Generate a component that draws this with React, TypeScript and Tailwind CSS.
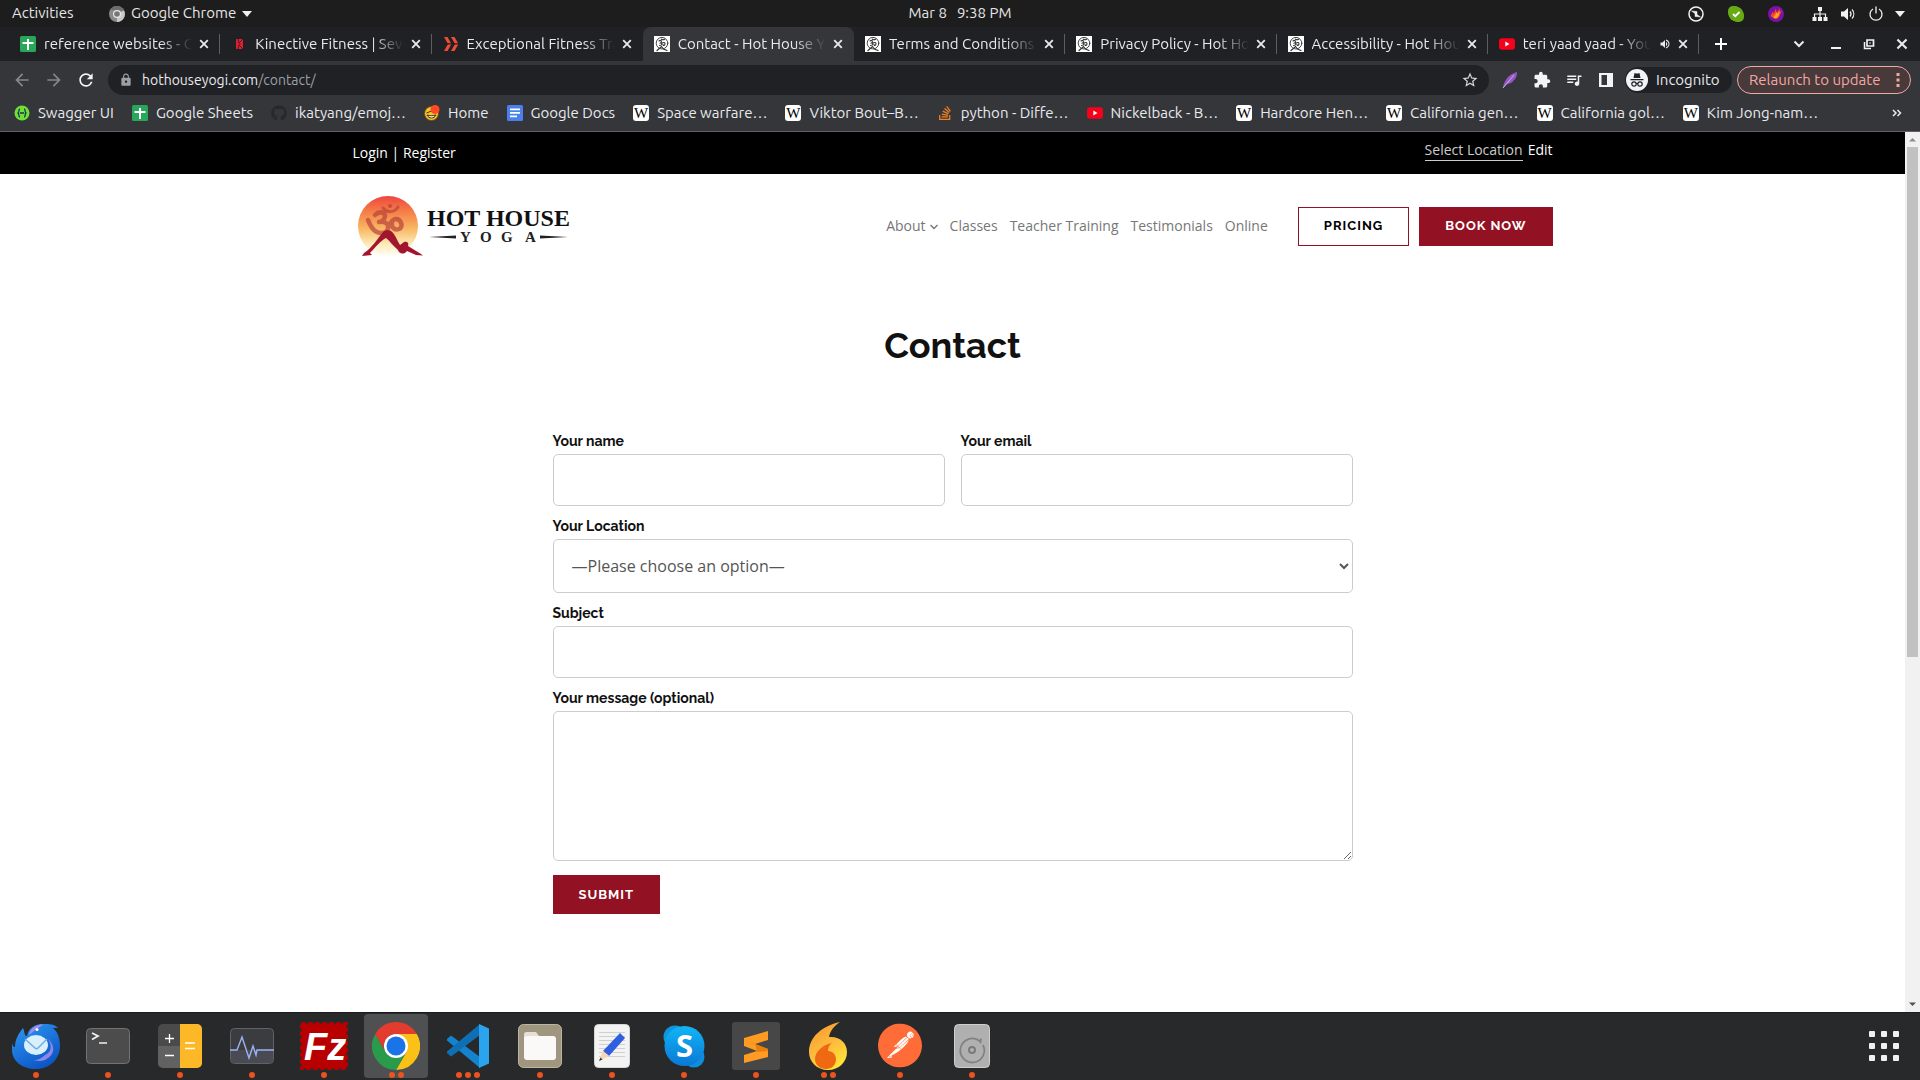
import React from "react";
import {
  MdArrowBack,
  MdArrowForward,
  MdRefresh,
  MdLock,
  MdStarBorder,
  MdExtension,
  MdQueueMusic,
  MdVolumeUp,
} from "react-icons/md";
import { FaGithub, FaStackOverflow } from "react-icons/fa";
import { SiPostman } from "react-icons/si";

type IconKind =
  | "sheets"
  | "kinective"
  | "exceptional"
  | "hothouse"
  | "youtube"
  | "swagger"
  | "github"
  | "home"
  | "docs"
  | "wiki"
  | "stack";

function SiteIcon({ kind }: { kind: IconKind }) {
  switch (kind) {
    case "sheets":
      return (
        <svg viewBox="0 0 16 16" className="size-4 shrink-0" aria-hidden="true">
          <rect width="16" height="16" rx="1.500" fill="#28a65a" />
          <path d="M7 3h2v11H7zM2.500 6h11v2h-11z" fill="#fff" />
        </svg>
      );
    case "kinective":
      return (
        <svg viewBox="0 0 16 16" className="size-4 shrink-0" aria-hidden="true">
          <path d="M5 3h7v10H5z" fill="#d62433" />
          <path d="M7 3l1 4 4-4M7 13l1-4 4 4M7.500 8h2" fill="none" stroke="#5d1018" strokeWidth=".9" />
        </svg>
      );
    case "exceptional":
      return (
        <svg viewBox="0 0 16 16" className="size-4 shrink-0" aria-hidden="true">
          <path d="M1 1h3.500l4 7-4 7H1l4-7zM8 1h3.500l4 7-4 7H8l4-7z" fill="#f04a38" />
          <path d="M0 7.200h16v1.300H0z" fill="#202124" />
        </svg>
      );
    case "hothouse":
      return (
        <svg viewBox="0 0 16 16" className="size-4 shrink-0" aria-hidden="true">
          <rect width="16" height="16" fill="#fff" />
          <g fill="none" stroke="#333" strokeLinecap="round">
            <circle cx="8" cy="7.200" r="5.800" strokeWidth=".9" />
            <path d="M5 5c2-1.500 3.500.5 1.500 2 2 0 2 2.500-1 2.500M8 7c2-1 3-.5 3 1s-2 2-2 .5M7.500 3.200c1 .8 2 .8 3 0" strokeWidth="1.100" />
            <path d="M3 14.500l4.500-4 2 2.500 3.500 1.500" strokeWidth="1.200" />
          </g>
        </svg>
      );
    case "youtube":
      return (
        <svg viewBox="0 0 16 16" className="size-4 shrink-0" aria-hidden="true">
          <rect y="2.200" width="16" height="11.600" rx="3" fill="#f6001c" />
          <path d="M6.300 5.500v5L10.500 8z" fill="#fff" />
        </svg>
      );
    case "swagger":
      return (
        <svg viewBox="0 0 16 16" className="size-4 shrink-0" aria-hidden="true">
          <circle cx="8" cy="8" r="7.500" fill="#6fe03a" />
          <path
            d="M6 4C4.500 4 5 6 4.700 7c-.2.600-.7 1-1.200 1 .5 0 1 .4 1.200 1 .3 1-.2 3 1.300 3M10 4c1.500 0 1 2 1.300 3 .2.600.7 1 1.200 1-.5 0-1 .4-1.200 1-.3 1 .2 3-1.300 3M6 8h4"
            fill="none"
            stroke="#173647"
            strokeWidth="1.300"
          />
        </svg>
      );
    case "github":
      return <FaGithub className="size-4 shrink-0 text-[#24292e]" aria-hidden="true" />;
    case "home":
      return (
        <svg viewBox="0 0 16 16" className="size-4 shrink-0" aria-hidden="true">
          <circle cx="7.500" cy="8.500" r="7" fill="#f5c52c" stroke="#6b4a12" />
          <path d="M2.500 8l5-2M3 10c2 4 7 4 9 0-3 1-6 1-9 0z" fill="#fff" stroke="#3a2a10" />
          <circle cx="11" cy="4.500" r="4.500" fill="#ff4b1f" />
        </svg>
      );
    case "docs":
      return (
        <svg viewBox="0 0 16 16" className="size-4 shrink-0" aria-hidden="true">
          <rect width="16" height="16" rx="1.500" fill="#4a80ee" />
          <path d="M3 3.500h10v1.800H3zM3 7h10v1.800H3zM3 10.500h7v1.800H3z" fill="#fff" />
        </svg>
      );
    case "wiki":
      return (
        <span
          aria-hidden="true"
          className="flex size-4 shrink-0 items-center justify-center rounded-[3px] bg-white font-['Liberation_Serif',serif] text-[15px] leading-4 text-black"
        >
          W
        </span>
      );
    case "stack":
      return <FaStackOverflow className="size-4 shrink-0 text-[#f48024]" aria-hidden="true" />;
  }
}

const tabs: { title: string; icon: IconKind; active?: boolean; audio?: boolean; line?: boolean }[] = [
  { title: "reference websites - Goo", icon: "sheets", line: true },
  { title: "Kinective Fitness | Seven", icon: "kinective", line: true },
  { title: "Exceptional Fitness Trai", icon: "exceptional" },
  { title: "Contact - Hot House Yog", icon: "hothouse", active: true },
  { title: "Terms and Conditions -", icon: "hothouse", line: true },
  { title: "Privacy Policy - Hot Hou", icon: "hothouse", line: true },
  { title: "Accessibility - Hot Hous", icon: "hothouse", line: true },
  { title: "teri yaad yaad - YouT", icon: "youtube", audio: true, line: true },
];

const bookmarks: { title: string; icon: IconKind }[] = [
  { title: "Swagger UI", icon: "swagger" },
  { title: "Google Sheets", icon: "sheets" },
  { title: "ikatyang/emoj…", icon: "github" },
  { title: "Home", icon: "home" },
  { title: "Google Docs", icon: "docs" },
  { title: "Space warfare…", icon: "wiki" },
  { title: "Viktor Bout–B…", icon: "wiki" },
  { title: "python - Diffe…", icon: "stack" },
  { title: "Nickelback - B…", icon: "youtube" },
  { title: "Hardcore Hen…", icon: "wiki" },
  { title: "California gen…", icon: "wiki" },
  { title: "California gol…", icon: "wiki" },
  { title: "Kim Jong-nam…", icon: "wiki" },
];

function Cross({ className }: { className: string }) {
  return (
    <svg viewBox="0 0 10 10" className={className} aria-hidden="true">
      <path d="M1.200 1.200l7.600 7.600M8.800 1.200L1.200 8.800" stroke="currentColor" strokeWidth="1.800" />
    </svg>
  );
}

function SystemBar() {
  return (
    <header className="grid h-[27px] shrink-0 grid-cols-[1fr_auto_1fr] items-center bg-[#1d1d1d] text-[15px] text-[#e6e6e6]">
      <div className="flex items-center pl-3">
        <button type="button" className="w-[97px] text-left">
          Activities
        </button>
        <button type="button" className="flex items-center gap-[6px]">
          <svg viewBox="0 0 16 16" className="size-4" aria-hidden="true">
            <circle cx="8" cy="8" r="8" fill="#8a8a8a" />
            <path d="M8 8L15 4.500A8 8 0 0 1 8 16z" fill="#c9c9c9" />
            <path d="M1 4a8 8 0 0 1 14 .5H8z" fill="#6e6e6e" />
            <circle cx="8" cy="8" r="4" fill="#e8e8e8" />
            <circle cx="8" cy="8" r="2.800" fill="#777" />
          </svg>
          <span>Google Chrome</span>
          <svg viewBox="0 0 10 6" className="h-[6px] w-[10px]" aria-hidden="true">
            <path d="M0 0h10L5 6z" fill="#f0f0f0" />
          </svg>
        </button>
      </div>
      <button type="button" className="flex gap-[10px]">
        <span>Mar 8</span>
        <span>9:38 PM</span>
      </button>
      <div className="flex items-center justify-end pr-[15px]">
        <svg viewBox="0 0 16 16" className="mr-6 size-4" aria-hidden="true">
          <circle cx="8" cy="8" r="7" fill="none" stroke="#f2f2f2" strokeWidth="1.500" />
          <path d="M3.500 5l5.500.5v3l3.500 2.500L7 10.500v-3z" fill="#f2f2f2" stroke="#f2f2f2" strokeWidth=".5" />
        </svg>
        <svg viewBox="0 0 16 16" className="mr-6 size-4" aria-hidden="true">
          <rect width="12" height="12" rx="5" fill="#66aa14" />
          <rect x="4" y="4" width="12" height="12" rx="5" fill="#66aa14" />
          <circle cx="8" cy="8" r="7.300" fill="#66aa14" />
          <path d="M5 8l2.300 2.200L11.500 6" fill="none" stroke="#fff" strokeWidth="1.800" />
        </svg>
        <svg viewBox="0 0 16 16" className="mr-7 size-4" aria-hidden="true">
          <circle cx="8" cy="8" r="8" fill="#7b12a8" />
          <path d="M2.500 10L5 5.500 5.500 8 8 2.500 8.500 7 12 2l-.5 4L14 4.500 11 11c-1 1.500-2.500 2-4 2z" fill="#ff4a26" />
          <path d="M5.500 12c0-2 2.500-3 3-6l1 2 2-3c0 3-1 5-3 7z" fill="#ffb11b" />
        </svg>
        <svg viewBox="0 0 16 16" className="mr-3 size-4" aria-hidden="true">
          <path d="M6 1h4v4H6zM0.500 11h4v4h-4zM6 11h4v4H6zM11.500 11h4v4h-4z" fill="#f2f2f2" />
          <path d="M8 5v6M2.500 11V8h11v3" fill="none" stroke="#f2f2f2" strokeWidth="1.200" />
        </svg>
        <svg viewBox="0 0 16 16" className="mr-3 size-4" aria-hidden="true">
          <path d="M1 5.500h3L8 2v12L4 10.500H1z" fill="#f2f2f2" />
          <path d="M10 5.500c1.300 1.500 1.300 3.500 0 5M12 3.500c2.400 2.600 2.400 6.400 0 9" fill="none" stroke="#f2f2f2" strokeWidth="1.200" />
        </svg>
        <svg viewBox="0 0 16 16" className="mr-[11px] size-4" aria-hidden="true">
          <path d="M5 3a6 6 0 1 0 6 0M8 0.500v7" fill="none" stroke="#f2f2f2" strokeWidth="1.300" />
        </svg>
        <svg viewBox="0 0 10 6" className="h-[6px] w-[10px]" aria-hidden="true">
          <path d="M0 0h10L5 6z" fill="#f0f0f0" />
        </svg>
      </div>
    </header>
  );
}

function TabStrip() {
  return (
    <div className="flex h-[34px] shrink-0 bg-[#202124] pl-[9px] text-[15px] text-[#e8eaed]">
      <div role="tablist" className="flex min-w-0 flex-1">
        {tabs.map((tab, i) => (
          <div
            key={i}
            role="tab"
            aria-selected={!!tab.active}
            className={
              tab.active
                ? "relative flex min-w-0 flex-1 items-center rounded-t-lg bg-[#35363a] pr-2 pl-[11px]"
                : "relative flex min-w-0 flex-1 items-center pr-2 pl-[11px]"
            }
          >
            <SiteIcon kind={tab.icon} />
            <span className="ml-2 min-w-0 flex-1 overflow-hidden [mask-image:linear-gradient(to_right,black_calc(100%-32px),transparent)] whitespace-nowrap">
              {tab.title}
            </span>
            {tab.audio && <MdVolumeUp className="ml-2 size-3 shrink-0" aria-hidden="true" />}
            <button type="button" aria-label="Close tab" className="ml-1 flex size-4 shrink-0 items-center justify-center">
              <Cross className="size-[10px]" />
            </button>
            {tab.line && <span className="absolute top-[7px] right-0 h-5 w-px bg-[#5b5d61]" />}
          </div>
        ))}
      </div>
      <div className="flex w-[221px] shrink-0 items-center justify-between pr-3 pl-4">
        <button type="button" aria-label="New tab">
          <svg viewBox="0 0 12 12" className="size-3" aria-hidden="true">
            <path d="M6 0v12M0 6h12" stroke="#fff" strokeWidth="2" />
          </svg>
        </button>
        <div className="flex items-center gap-[21px]">
          <button type="button" aria-label="Search tabs" className="mr-1">
            <svg viewBox="0 0 12 8" className="h-2 w-3" aria-hidden="true">
              <path d="M1.500 1.500L6 6l4.500-4.500" fill="none" stroke="#e8eaed" strokeWidth="2" />
            </svg>
          </button>
          <button type="button" aria-label="Minimize">
            <svg viewBox="0 0 12 12" className="size-3" aria-hidden="true">
              <path d="M1 9h10v2H1z" fill="#f2f2f2" />
            </svg>
          </button>
          <button type="button" aria-label="Restore">
            <svg viewBox="0 0 12 12" className="size-3" aria-hidden="true">
              <path d="M4 2h6.500v6H4zM7 4.500v1" fill="none" stroke="#f2f2f2" strokeWidth="1.700" />
              <path d="M1.500 4v6.500H8" fill="none" stroke="#f2f2f2" strokeWidth="1.500" />
            </svg>
          </button>
          <button type="button" aria-label="Close window">
            <Cross className="size-3" />
          </button>
        </div>
      </div>
    </div>
  );
}

function Toolbar() {
  return (
    <div className="flex h-[38px] shrink-0 items-center bg-[#35363a] pr-[9px] pl-3 text-[15px] text-[#e8eaed]">
      <div className="flex gap-3">
        <button type="button" aria-label="Back" className="text-[#85878a]">
          <MdArrowBack className="size-5" />
        </button>
        <button type="button" aria-label="Forward" className="text-[#85878a]">
          <MdArrowForward className="size-5" />
        </button>
        <button type="button" aria-label="Reload" className="text-[#f1f3f4]">
          <MdRefresh className="size-5" />
        </button>
      </div>
      <div className="ml-3 flex h-[30px] min-w-0 flex-1 items-center rounded-full bg-[#202124] pr-[10px] pl-[11px]">
        <MdLock className="size-[14px] shrink-0 text-[#9aa0a6]" aria-hidden="true" />
        <a href="#address" className="ml-[9px] flex-1 text-[14px] text-[#e8eaed]">
          hothouseyogi.com<span className="text-[#9aa0a6]">/contact/</span>
        </a>
        <button type="button" aria-label="Bookmark this page">
          <MdStarBorder className="size-[18px] text-[#d5d7da]" />
        </button>
      </div>
      <div className="ml-3 flex items-center gap-[14px]">
        <svg viewBox="0 0 18 18" className="size-[18px]" aria-hidden="true">
          <path d="M2 17C3 9 8 3 16 1c0 4-1 7-4 9 .5.500-3 3-6 3z" fill="#9457c4" />
          <path d="M2 17L13 4" stroke="#d3a9ef" strokeWidth="1" />
        </svg>
        <MdExtension className="size-[18px] text-[#f1f3f4]" aria-hidden="true" />
        <MdQueueMusic className="size-[18px] text-[#f1f3f4]" aria-hidden="true" />
        <svg viewBox="0 0 18 18" className="size-[18px]" aria-hidden="true">
          <path d="M2 2h14v14H2zM4.500 4v10H10V4z" fill="#f1f3f4" fillRule="evenodd" />
        </svg>
      </div>
      <button type="button" className="ml-[10px] flex h-[26px] w-[107px] items-center gap-2 rounded-full bg-[#202124] pl-px">
        <svg viewBox="0 0 22 22" className="size-[22px]" aria-hidden="true">
          <circle cx="11" cy="11" r="11" fill="#f1f3f4" />
          <path d="M7.500 9l1-5 1.500.5h2l1.500-.5 1 5zM4.500 10h13v1.300h-13z" fill="#202124" />
          <circle cx="8" cy="15" r="2.200" fill="none" stroke="#202124" strokeWidth="1.200" />
          <circle cx="14" cy="15" r="2.200" fill="none" stroke="#202124" strokeWidth="1.200" />
          <path d="M10 14.500h2" stroke="#202124" />
        </svg>
        Incognito
      </button>
      <button
        type="button"
        className="ml-[5px] flex h-7 w-[174px] items-center justify-between rounded-full border border-[#f2a9a4] bg-[#48393b] pr-[10px] pl-[11px] text-[#f2a9a4]"
      >
        Relaunch to update
        <svg viewBox="0 0 4 14" className="h-[14px] w-1" aria-hidden="true">
          <path d="M.5 0h3v3h-3zM.5 5.500h3v3h-3zM.5 11h3v3h-3z" fill="#f2a9a4" />
        </svg>
      </button>
    </div>
  );
}

function BookmarksBar() {
  return (
    <nav
      aria-label="Bookmarks"
      className="flex h-[33px] shrink-0 items-center border-b border-[#5f6164] bg-[#35363a] pr-[18px] pb-1 pl-[14px] text-[15px] text-[#e8eaed]"
    >
      <ul className="flex min-w-0 flex-1 gap-[18px]">
        {bookmarks.map((b, i) => (
          <li key={i}>
            <a href="#bookmark" className="flex items-center gap-2 whitespace-nowrap">
              <SiteIcon kind={b.icon} />
              {b.title}
            </a>
          </li>
        ))}
      </ul>
      <button type="button" aria-label="More bookmarks">
        <svg viewBox="0 0 10 8" className="h-2 w-[10px]" aria-hidden="true">
          <path d="M1 1l3 3-3 3M5.500 1l3 3-3 3" fill="none" stroke="#e8eaed" strokeWidth="1.500" />
        </svg>
      </button>
    </nav>
  );
}

function YogaLogo() {
  return (
    <a href="#home" aria-label="Hot House Yoga" className="block">
      <svg viewBox="0 0 220 64" className="h-16 w-[220px]">
        <defs>
          <linearGradient id="sun" x1="0" y1="0" x2="0" y2="1">
            <stop offset="0" stopColor="#ee4640" />
            <stop offset=".25" stopColor="#f47c45" />
            <stop offset=".55" stopColor="#f9b866" />
            <stop offset=".8" stopColor="#fdebb8" />
            <stop offset="1" stopColor="#fffdf6" />
          </linearGradient>
        </defs>
        <circle cx="35" cy="32" r="30" fill="url(#sun)" />
        <g fill="none" stroke="#b8433a" strokeOpacity=".7" strokeLinecap="round" strokeLinejoin="round">
          <path
            d="M22 21c5-5 13-2 9 4-1 2-4 3-5 3 6-1 10 2 9 6-1 5-4 5-7 5-6 0-10-5-13-13M34 30c4 2 4-5 9-5s8 8 3 10-8-3-7-6"
            strokeWidth="4.500"
          />
          <path d="M30 14c4 5 11 5 15-1" strokeWidth="3" />
        </g>
        <circle cx="37" cy="12" r="2" fill="#b8433a" fillOpacity=".75" />
        <path
          d="M9 62l2-3c9-6 13-14 19-21 2-2 5-3 8-1 4 3 6 9 9 14l4-3c4-1 5 2 4 4l13 8 2 1.500-7-.5-9-4c-3 4-8 3-9-1-5-4-8-9-12-12-6 3-11 10-16 15l2 2z"
          fill="#a3142f"
        />
        <text x="74" y="32" fontFamily="'Liberation Serif', serif" fontSize="24" fontWeight="700" fill="#111">
          HOT HOUSE
        </text>
        <g fontFamily="'Liberation Serif', serif" fontSize="15" fontWeight="700" fill="#222">
          <text x="107" y="48">Y</text>
          <text x="127" y="48">O</text>
          <text x="148" y="48">G</text>
          <text x="172" y="48">A</text>
        </g>
        <path d="M76 43l27-1.500v3zM215 43l-28-1.500v3z" fill="#222" />
      </svg>
    </a>
  );
}

function SiteHeader() {
  return (
    <>
      <div className="h-[42px] shrink-0 bg-black text-[14px] text-white">
        <div className="mx-auto flex max-w-[1200px] justify-between leading-5">
          <p className="pt-[11px]">
            <a href="#login">Login</a> | <a href="#register">Register</a>
          </p>
          <p className="flex items-start gap-[5px] pt-2">
            <a href="#location" className="border-b border-[#ccc] text-[#ccc]">
              Select Location
            </a>
            <a href="#edit">Edit</a>
          </p>
        </div>
      </div>
      <div className="mx-auto flex h-[104px] w-full max-w-[1200px] shrink-0 items-center justify-between">
        <YogaLogo />
        <div className="flex items-center text-[14px] text-[#777]">
          <nav aria-label="Main" className="mr-[30px] flex gap-3 pb-[2px]">
            <a href="#about" className="flex items-center gap-1">
              About
              <svg viewBox="0 0 8 6" className="mt-1 h-[6px] w-2" aria-hidden="true">
                <path d="M.5 1L4 4.500 7.500 1" fill="none" stroke="#777" strokeWidth="1.400" />
              </svg>
            </a>
            <a href="#classes">Classes</a>
            <a href="#teacher-training">Teacher Training</a>
            <a href="#testimonials">Testimonials</a>
            <a href="#online">Online</a>
          </nav>
          <a
            href="#pricing"
            className="flex h-[39px] items-center border border-[#921122] px-[25px] font-['Raleway','Lato',sans-serif] text-[13px] font-bold tracking-[1px] text-black"
          >
            PRICING
          </a>
          <a
            href="#book"
            className="ml-[10px] flex h-[39px] items-center border border-[#921122] bg-[#921122] px-[25px] font-['Raleway','Lato',sans-serif] text-[13px] font-bold tracking-[1px] text-white"
          >
            BOOK NOW
          </a>
        </div>
      </div>
    </>
  );
}

const labelClass = "block font-['Raleway','Lato',sans-serif] text-[14px] leading-[25px] font-bold text-[#111]";
const inputClass = "block h-[52px] w-full rounded-[5px] border border-[#ccc] bg-white px-4 text-[16px] text-[#555]";

function ContactForm() {
  return (
    <form className="mx-auto mt-[59px] flex w-full max-w-[800px] flex-col gap-2" onSubmit={(e) => e.preventDefault()}>
      <div className="grid grid-cols-2 gap-4">
        <div>
          <label htmlFor="name" className={labelClass}>
            Your name
          </label>
          <input id="name" type="text" className={inputClass} />
        </div>
        <div>
          <label htmlFor="email" className={labelClass}>
            Your email
          </label>
          <input id="email" type="email" className={inputClass} />
        </div>
      </div>
      <div>
        <label htmlFor="location" className={labelClass}>
          Your Location
        </label>
        <select
          id="location"
          className="block h-[54px] w-full rounded-[5px] border border-[#ccc] bg-white pl-[14px] text-[16px] text-[#555]"
        >
          <option>—Please choose an option—</option>
        </select>
      </div>
      <div>
        <label htmlFor="subject" className={labelClass}>
          Subject
        </label>
        <input id="subject" type="text" className={inputClass} />
      </div>
      <div>
        <label htmlFor="message" className={labelClass}>
          Your message (optional)
        </label>
        <textarea
          id="message"
          className="block h-[150px] w-full resize rounded-[5px] border border-[#ccc] bg-white p-4 text-[16px] text-[#555]"
        />
      </div>
      <button
        type="submit"
        className="mt-[6px] flex h-[39px] items-center self-start border border-[#921122] bg-[#921122] px-[25px] font-['Raleway','Lato',sans-serif] text-[13px] font-bold tracking-[1px] text-white"
      >
        SUBMIT
      </button>
    </form>
  );
}

function Scrollbar() {
  return (
    <div aria-hidden="true" className="flex w-[15px] shrink-0 flex-col items-center bg-[#f1f1f1]">
      <svg viewBox="0 0 15 15" className="size-[15px]">
        <path d="M4 9.500h7L7.500 6z" fill="#8b8b8b" />
      </svg>
      <div className="h-[58%] w-[11px] bg-[#c1c1c1]" />
      <div className="flex-1" />
      <svg viewBox="0 0 15 15" className="size-[15px]">
        <path d="M4 5.500h7L7.500 9z" fill="#505050" />
      </svg>
    </div>
  );
}

const dockApps: { name: string; dots: number; active?: boolean; art: React.ReactNode }[] = [
  {
    name: "Thunderbird",
    dots: 1,
    art: (
      <>
        <defs>
          <linearGradient id="tb" x1="0" y1="0" x2="0.600" y2="1">
            <stop offset="0" stopColor="#2f9bf5" />
            <stop offset="1" stopColor="#0c55c4" />
          </linearGradient>
        </defs>
        <path d="M0 20c0 4 2 5 3 5 0-8 4-14 8-19 2 4 1 8 4 8 1-6 6-12 16-12 6 0 12 0 15 4l-5 0c5 4 7 11 7 18 0 13-10 23-24 23C10 47 0 39 0 28z" fill="url(#tb)" />
        <path d="M17 13c1-7 7-10 14-11-2 3-6 4-9 7z" fill="#a58cf0" />
        <path d="M33 33c7-3 7-10 3-16 6 5 9 15-3 21-6 2-11 0-11 0 4 0 8-2 11-5z" fill="#8e86ea" />
        <ellipse cx="24" cy="23" rx="12" ry="10" fill="#d9effc" />
        <path d="M13 17l10 9c1 1 2 1 3 0l9-9" fill="none" stroke="#6daee0" strokeWidth="1.500" />
        <circle cx="25" cy="7.500" r="1.500" fill="#fff" />
      </>
    ),
  },
  {
    name: "Terminal",
    dots: 1,
    art: (
      <>
        <rect x="2.500" y="6.500" width="43" height="35" rx="4" fill="#4c4c4c" stroke="#737373" />
        <path d="M8 11l6 3-6 3.500" fill="none" stroke="#f0f0f0" strokeWidth="1.800" />
        <path d="M15 21h8" stroke="#f0f0f0" strokeWidth="1.500" />
      </>
    ),
  },
  {
    name: "Calculator",
    dots: 1,
    art: (
      <>
        <rect x="2" y="2" width="44" height="44" rx="5" fill="#4a4a4a" />
        <path d="M2 24h22v22H7a5 5 0 0 1-5-5z" fill="#616161" />
        <path d="M24 2h17a5 5 0 0 1 5 5v34a5 5 0 0 1-5 5H24z" fill="#fcb827" />
        <path d="M13.500 12v9M9 16.500h9M9 33.500h9M29 21h10M29 26.500h10" stroke="#fff" strokeWidth="1.300" />
      </>
    ),
  },
  {
    name: "System Monitor",
    dots: 1,
    art: (
      <>
        <rect x="2.500" y="6.500" width="43" height="35" rx="4" fill="#3b3c40" stroke="#626262" />
        <path d="M3 28h42v9a4 4 0 0 1-4 4H7a4 4 0 0 1-4-4z" fill="#4a4b52" />
        <path d="M2 28h7l5-13 7 21 4-12 3 9 1-5h17" fill="none" stroke="#9db2f5" strokeWidth="1.400" />
      </>
    ),
  },
  {
    name: "FileZilla",
    dots: 1,
    art: (
      <>
        <rect x="1.500" y="1.500" width="45" height="45" fill="#b80000" stroke="#b80000" strokeWidth="3" strokeDasharray="4 3" />
        <text x="4" y="38" fontFamily="'Liberation Sans', sans-serif" fontSize="38" fontStyle="italic" fontWeight="700" fill="#fff">
          Fz
        </text>
      </>
    ),
  },
  {
    name: "Google Chrome",
    dots: 2,
    active: true,
    art: (
      <>
        <path d="M3.200 12A24 24 0 0 1 44.800 12H24z" fill="#e33b2e" />
        <path d="M24 12h20.800A24 24 0 0 1 24 48l10.400-18z" fill="#fbc116" />
        <path d="M3.200 12A24 24 0 0 0 24 48l10.400-18H13.600z" fill="#2a9a4b" />
        <path d="M3.200 12L13.600 30A12 12 0 0 1 24 12z" fill="#e33b2e" />
        <circle cx="24" cy="24" r="12" fill="#fff" />
        <circle cx="24" cy="24" r="9.500" fill="#1a73e8" />
      </>
    ),
  },
  {
    name: "Visual Studio Code",
    dots: 3,
    art: (
      <>
        <path d="M3 17l4-3.500L36 35v11L3 18.500z" fill="#1483cd" />
        <path d="M3 31l4 3.500L36 13V2L3 29.500z" fill="#0f6fb5" />
        <path d="M35 2l10 4.500v35L35 46z" fill="#2aa4ee" />
      </>
    ),
  },
  {
    name: "Files",
    dots: 1,
    art: (
      <>
        <rect x="2.500" y="2.500" width="43" height="43" rx="5" fill="#a09680" stroke="#bdb59f" />
        <path d="M8 12c0-1 1-2 2-2h10l3 4v6H8z" fill="#e4e0d6" />
        <rect x="8" y="14" width="32" height="24" rx="3" fill="#faf9f7" />
      </>
    ),
  },
  {
    name: "Text Editor",
    dots: 1,
    art: (
      <>
        <rect x="6.500" y="2.500" width="35" height="43" rx="4" fill="#f3f3f3" stroke="#d8d8d8" />
        <path d="M11 10.500h26M11 14.500h26M11 18.500h26M11 22.500h26M11 26.500h26M11 30.500h26M11 34.500h26" stroke="#d0d0d0" />
        <path d="M32 11l5 5-16 18-6-5z" fill="#2f5fe0" />
        <path d="M15 29l6 5-10 5z" fill="#fbd5b0" />
        <path d="M12.500 35.500l2 2-3.500 1.500z" fill="#333" />
      </>
    ),
  },
  {
    name: "Skype",
    dots: 1,
    art: (
      <>
        <defs>
          <linearGradient id="sky" x1="0" y1="0" x2="0" y2="1">
            <stop offset="0" stopColor="#12b5f5" />
            <stop offset="1" stopColor="#0a78d6" />
          </linearGradient>
        </defs>
        <circle cx="15" cy="15" r="11.500" fill="#0d96dd" />
        <circle cx="34" cy="35" r="10.500" fill="#0d8ddd" />
        <circle cx="24.500" cy="24" r="20" fill="url(#sky)" />
        <text x="24.500" y="35" textAnchor="middle" fontFamily="'Open Sans', sans-serif" fontSize="31" fontWeight="700" fill="#fff">
          S
        </text>
      </>
    ),
  },
  {
    name: "Sublime Text",
    dots: 1,
    art: (
      <>
        <rect width="48" height="48" rx="3" fill="#474747" />
        <path d="M12 16l24-7v9l-13 4 13 5v8l-24 6v-8l13-4-13-5z" fill="#ff9a22" />
        <path d="M23 22l13 5v2l-11 1 0-1z" fill="#e5800f" />
      </>
    ),
  },
  {
    name: "Burn",
    dots: 2,
    art: (
      <>
        <defs>
          <linearGradient id="flame" x1="0" y1="0" x2="0.500" y2="1">
            <stop offset="0" stopColor="#f8932d" />
            <stop offset=".6" stopColor="#fdbb3d" />
            <stop offset="1" stopColor="#ffe138" />
          </linearGradient>
        </defs>
        <path d="M36 0C18 4 5 15 5 30c0 10 8 18 19 18s19-8 19-18c0-9-7-16-18-15 1-6 5-11 11-15z" fill="url(#flame)" />
        <path d="M28 21c-10 2-17 9-17 16 0 6 5 10 11 10s10-4 10-10c0-4-3-8-8-8 0-3 1-6 4-8z" fill="#ee6912" />
      </>
    ),
  },
  {
    name: "Postman",
    dots: 1,
    art: (
      <>
        <circle cx="24" cy="23.500" r="20" fill="#fff" />
        <SiPostman x="2" y="1.500" size={44} color="#ff6c37" />
      </>
    ),
  },
  {
    name: "Disk",
    dots: 1,
    art: (
      <>
        <rect x="6.500" y="2.500" width="35" height="43" rx="4" fill="#b0b0b0" stroke="#cfcfcf" />
        <circle cx="24" cy="28" r="3" fill="none" stroke="#7a7a7a" strokeWidth="2" />
        <path d="M35 23a12 12 0 1 1-4-4.500l1.500 1.500.5-3.500" fill="none" stroke="#828282" strokeWidth="1.800" />
      </>
    ),
  },
];

function Dock() {
  return (
    <footer className="flex h-[68px] shrink-0 items-start justify-between border-t border-[#1b1c1f] bg-[#28292b] pr-[21px] pl-1">
      <div className="flex gap-2 pt-px">
        {dockApps.map((app) => (
          <button
            key={app.name}
            type="button"
            aria-label={app.name}
            className={
              app.active
                ? "flex size-16 flex-col items-center rounded-[4px] bg-[#4f5052] pt-2"
                : "flex size-16 flex-col items-center rounded-[4px] pt-2"
            }
          >
            <svg viewBox="0 0 48 48" className="size-12 shrink-0" aria-hidden="true">
              {app.art}
            </svg>
            <span className="mt-[2px] flex gap-[3px]">
              {Array.from({ length: app.dots }, (_, i) => (
                <span key={i} className="size-[6px] rounded-full bg-[#e95420]" />
              ))}
            </span>
          </button>
        ))}
      </div>
      <button type="button" aria-label="Show applications" className="mt-[18px] grid grid-cols-3 gap-[6px]">
        {Array.from({ length: 9 }, (_, i) => (
          <span key={i} className="size-[6px] rounded-[1px] bg-[#f0f0ee]" />
        ))}
      </button>
    </footer>
  );
}

export default function App() {
  return (
    <div className="flex h-screen flex-col overflow-hidden bg-white font-['Ubuntu','Noto_Sans',sans-serif]">
      <SystemBar />
      <TabStrip />
      <Toolbar />
      <BookmarksBar />
      <div className="flex min-h-0 flex-1">
        <main className="flex min-w-0 flex-1 flex-col overflow-hidden bg-white font-['Open_Sans',sans-serif]">
          <SiteHeader />
          <h1 className="mt-[42px] text-center font-['Raleway','Lato',sans-serif] text-[36px] leading-[50px] font-bold text-[#111]">
            Contact
          </h1>
          <ContactForm />
        </main>
        <Scrollbar />
      </div>
      <Dock />
    </div>
  );
}
